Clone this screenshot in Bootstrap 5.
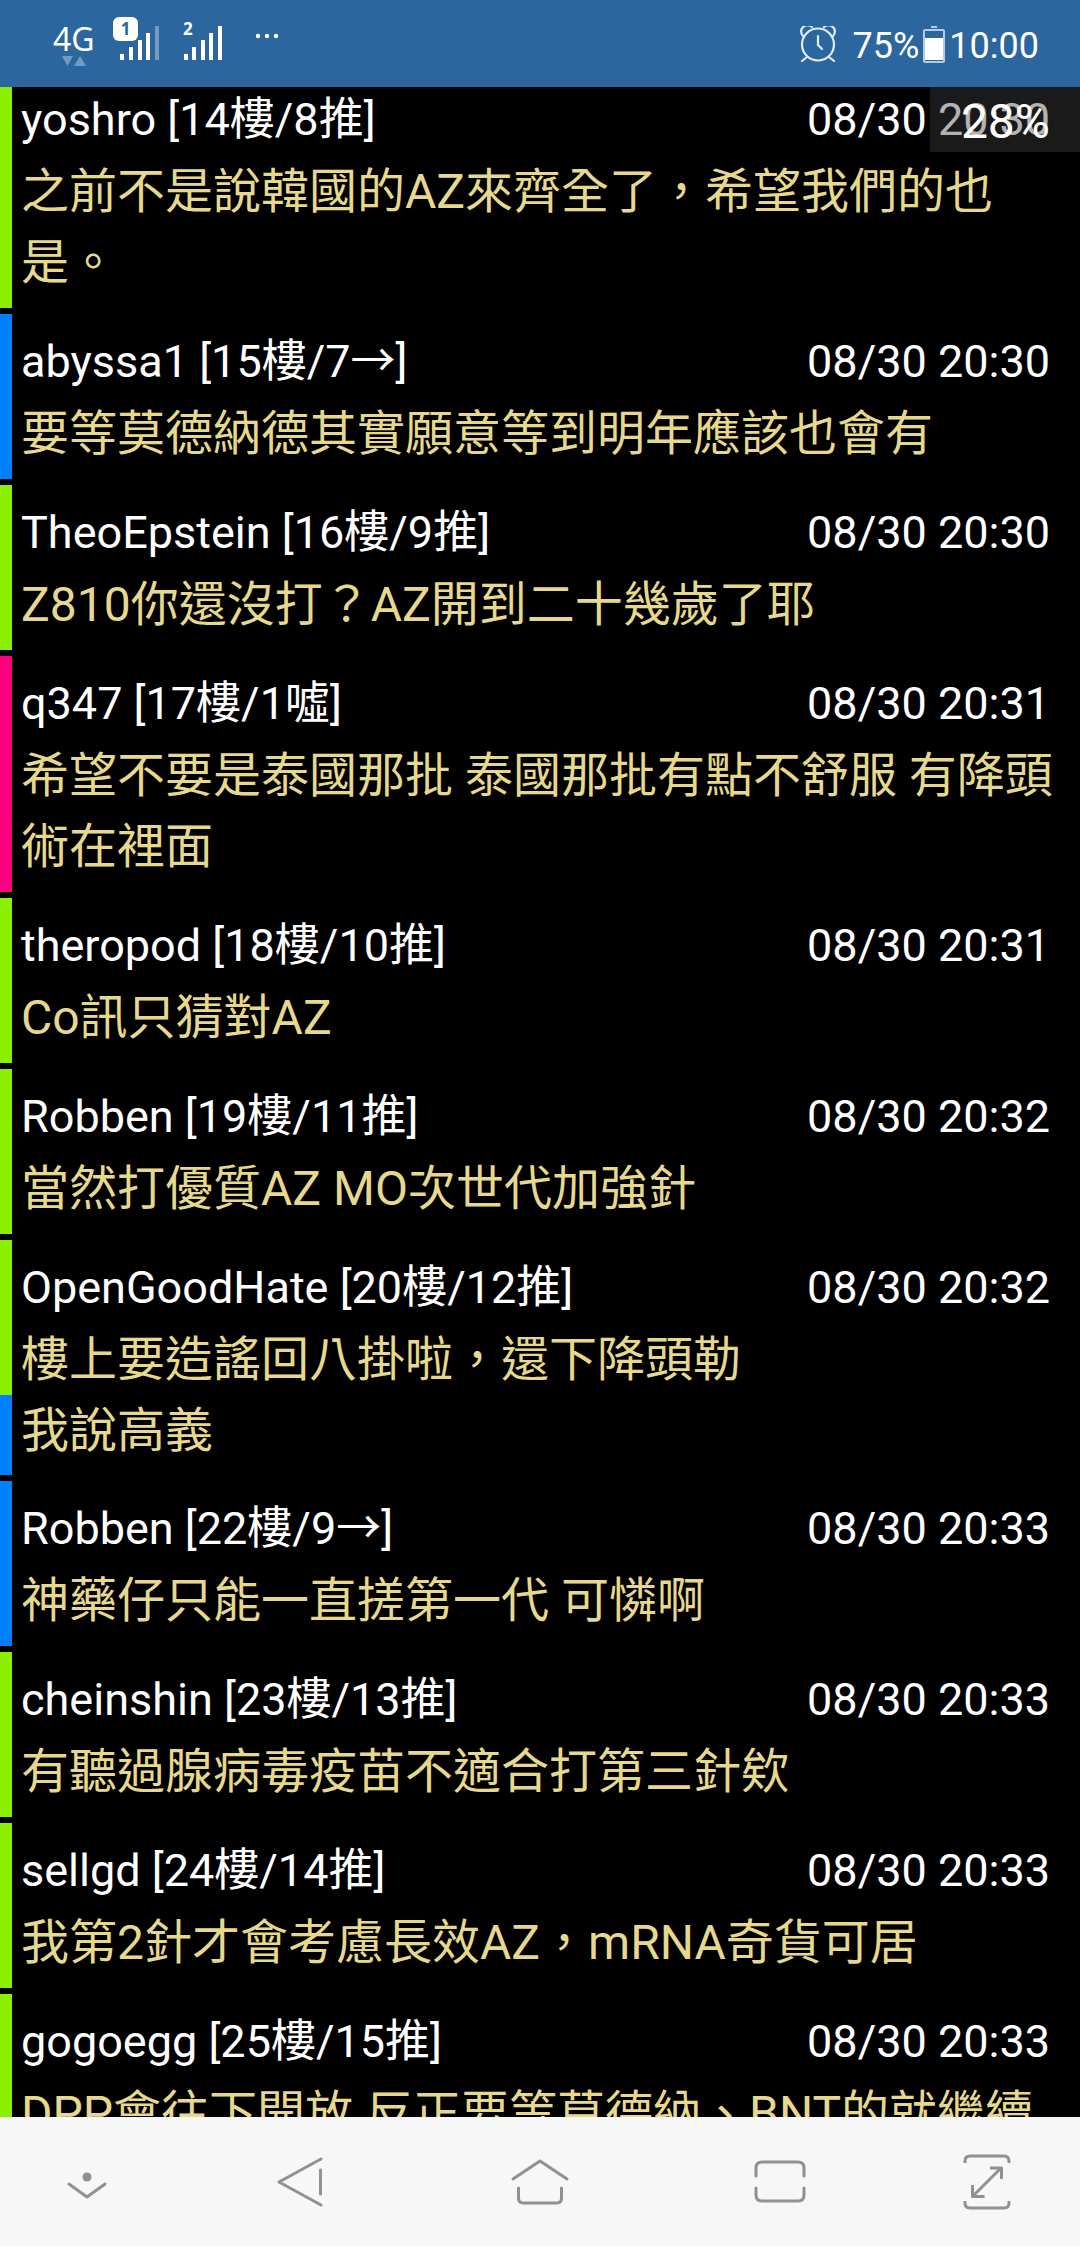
<!DOCTYPE html>
<html lang="zh-Hant" class="h-100">
<head>
<meta charset="utf-8">
<meta name="viewport" content="width=device-width, initial-scale=1">
<title>推文</title>
<link href="https://cdn.jsdelivr.net/npm/bootstrap@5.3.0/dist/css/bootstrap.min.css" rel="stylesheet">
<style>
:root { --push: #8cee00; --arrow: #0080ff; --boo: #ff0080; }
body { font-family: Roboto, "Noto Sans CJK TC", sans-serif; background: #000; }
.statusbar { height: 87px; background: #2b669e; font-size: 36px; line-height: 48px; padding: 4px 41px 0 48px; z-index: 2; }
.feed { min-height: 0; }
.feed-list { margin-top: -15px; }
.comment { border-left: 12px solid var(--push); padding: 14px 24px 10px 9px; margin-bottom: 6px; }
.comment.is-arrow { border-color: var(--arrow); }
.comment.is-boo { border-color: var(--boo); }
.comment.is-joined { margin-bottom: 0; padding-bottom: 0; }
.comment.is-reply { padding-top: 0; padding-bottom: 9px; }
.comment-head { font-size: 45px; line-height: 68px; color: #fff; padding: 0 6px 2px 0; }
.comment-body { font-size: 48px; line-height: 71px; color: #e6d88c; }
.scroll-pos { width: 150px; height: 65px; line-height: 70px; padding-right: 30px; font-size: 48px; background: rgba(66,66,66,.4); }
.navkeys { height: 129px; background: #f7f7f7; z-index: 2; }
.key { border: 0; background: none; padding: 0; flex: 4 1 0; }
.key.key-side { flex-grow: 3; }
.key svg { display: block; margin: auto; }
</style>
<script src="https://cdn.jsdelivr.net/npm/bootstrap@5.3.0/dist/js/bootstrap.bundle.min.js"></script>
</head>
<body class="vh-100 overflow-hidden d-flex flex-column">
<header class="statusbar flex-shrink-0 d-flex justify-content-between align-items-center text-white">
  <svg width="240" height="60" viewBox="48 16 240 60" fill="#fff" role="img" aria-label="4G">
    <text x="53" y="51" font-family="Noto Sans" font-size="32" font-weight="400">4G</text>
    <path d="M62 56h11l-5.500 10zM74 66h12l-6-10z" opacity=".35"/>
    <rect x="113" y="17" width="25" height="24" rx="6"/>
    <text x="125.500" y="35" text-anchor="middle" font-family="Noto Sans" font-size="17" font-weight="700" fill="#2b669e">1</text>
    <path d="M120 54h4v6h-4zM129 47h4v13h-4zM138 40h4v20h-4zM146 33h4v27h-4z"/>
    <path d="M155 26h4v34h-4z" opacity=".35"/>
    <text x="183" y="35" font-family="Noto Sans" font-size="17" font-weight="700">2</text>
    <path d="M184 54h4v6h-4zM192 47h4v13h-4zM201 40h4v20h-4zM209 33h4v27h-4zM218 26h4v34h-4z"/>
    <circle cx="258" cy="36" r="2.200"/><circle cx="267" cy="36" r="2.200"/><circle cx="276" cy="36" r="2.200"/>
  </svg>
  <div class="d-flex align-items-center">
    <svg class="me-3" width="38" height="40" viewBox="798 25 38 40" fill="none" stroke="#e2ecf5" stroke-width="2.200" stroke-linecap="round" aria-hidden="true">
      <circle cx="817" cy="43.500" r="16"/><path d="M817 35v9l4 4M806 56l-5 4M828 56l5 4M802 35a6 6 0 1 1 9-9M832 35a6 6 0 1 0-9-9"/>
    </svg>
    <span>75%</span>
    <svg class="mx-1" width="22" height="40" viewBox="923 25 22 40" aria-hidden="true">
      <path d="M931 25h6v2h-6z" fill="#b4cbe0"/><rect x="924" y="29" width="20" height="32" rx="1" fill="none" stroke="#b4cbe0" stroke-width="2"/><path d="M925 37h18v22h-18z" fill="#fff"/>
    </svg>
    <span>10:00</span>
  </div>
</header>

<main class="feed flex-grow-1 overflow-hidden position-relative">
  <div class="feed-list">
    <article class="comment"><div class="comment-head d-flex justify-content-between"><span>yoshro [14樓/8推]</span><time>08/30 20:30</time></div><div class="comment-body">之前不是說韓國的AZ來齊全了，希望我們的也是。</div></article>
    <article class="comment is-arrow"><div class="comment-head d-flex justify-content-between"><span>abyssa1 [15樓/7→]</span><time>08/30 20:30</time></div><div class="comment-body">要等莫德納德其實願意等到明年應該也會有</div></article>
    <article class="comment"><div class="comment-head d-flex justify-content-between"><span>TheoEpstein [16樓/9推]</span><time>08/30 20:30</time></div><div class="comment-body">Z810你還沒打？AZ開到二十幾歲了耶</div></article>
    <article class="comment is-boo"><div class="comment-head d-flex justify-content-between"><span>q347 [17樓/1噓]</span><time>08/30 20:31</time></div><div class="comment-body">希望不要是泰國那批 泰國那批有點不舒服 有降頭術在裡面</div></article>
    <article class="comment"><div class="comment-head d-flex justify-content-between"><span>theropod [18樓/10推]</span><time>08/30 20:31</time></div><div class="comment-body">Co訊只猜對AZ</div></article>
    <article class="comment"><div class="comment-head d-flex justify-content-between"><span>Robben [19樓/11推]</span><time>08/30 20:32</time></div><div class="comment-body">當然打優質AZ MO次世代加強針</div></article>
    <article class="comment is-joined"><div class="comment-head d-flex justify-content-between"><span>OpenGoodHate [20樓/12推]</span><time>08/30 20:32</time></div><div class="comment-body">樓上要造謠回八掛啦，還下降頭勒</div></article>
    <article class="comment is-arrow is-reply"><div class="comment-body">我說高義</div></article>
    <article class="comment is-arrow"><div class="comment-head d-flex justify-content-between"><span>Robben [22樓/9→]</span><time>08/30 20:33</time></div><div class="comment-body">神藥仔只能一直搓第一代 可憐啊</div></article>
    <article class="comment"><div class="comment-head d-flex justify-content-between"><span>cheinshin [23樓/13推]</span><time>08/30 20:33</time></div><div class="comment-body">有聽過腺病毒疫苗不適合打第三針欸</div></article>
    <article class="comment"><div class="comment-head d-flex justify-content-between"><span>sellgd [24樓/14推]</span><time>08/30 20:33</time></div><div class="comment-body">我第2針才會考慮長效AZ，mRNA奇貨可居</div></article>
    <article class="comment"><div class="comment-head d-flex justify-content-between"><span>gogoegg [25樓/15推]</span><time>08/30 20:33</time></div><div class="comment-body">DPP會往下開放 反正要等莫德納、BNT的就繼續</div></article>
  </div>
  <div class="scroll-pos position-absolute top-0 end-0 text-end text-white">28%</div>
</main>

<nav class="navkeys flex-shrink-0 d-flex align-items-stretch" aria-label="系統導覽">
  <button class="key key-side" type="button" aria-label="隱藏"><svg width="60" height="60" viewBox="60 2152 60 60" fill="none" stroke="#919191" stroke-width="3" stroke-linecap="round" stroke-linejoin="round"><circle cx="87" cy="2177" r="4.500" fill="#919191" stroke="none"/><path d="M69 2184l18 13 18-13"/></svg></button>
  <button class="key" type="button" aria-label="返回"><svg width="60" height="60" viewBox="270 2152 60 60" fill="none" stroke="#919191" stroke-width="3" stroke-linecap="round" stroke-linejoin="round"><path d="M321 2159l-42 23 42 23M320.500 2170v24"/></svg></button>
  <button class="key" type="button" aria-label="首頁"><svg width="60" height="60" viewBox="510 2152 60 60" fill="none" stroke="#919191" stroke-width="3" stroke-linecap="round" stroke-linejoin="round"><path d="M513 2179l27-18 27 18M518.500 2188v10q0 5 5 5h33q5 0 5-5v-10"/></svg></button>
  <button class="key" type="button" aria-label="最近使用"><svg width="60" height="60" viewBox="750 2152 60 60" fill="none" stroke="#919191" stroke-width="3" stroke-linecap="round" stroke-linejoin="round"><path d="M756 2176v-8q0-6 6-6h36q6 0 6 6v8M756 2188v7q0 6 6 6h36q6 0 6-6v-7"/></svg></button>
  <button class="key key-side" type="button" aria-label="全螢幕"><svg width="60" height="60" viewBox="960 2152 60 60" fill="none" stroke="#919191" stroke-width="3" stroke-linejoin="round"><path d="M965 2163v-2q0-5 5-5h34q5 0 5 5v2M965 2201v2q0 5 5 5h34q5 0 5-5v-2M973 2196l28-28M990 2168h11.500v11M972.500 2185v11.500h12"/></svg></button>
</nav>
</body>
</html>
